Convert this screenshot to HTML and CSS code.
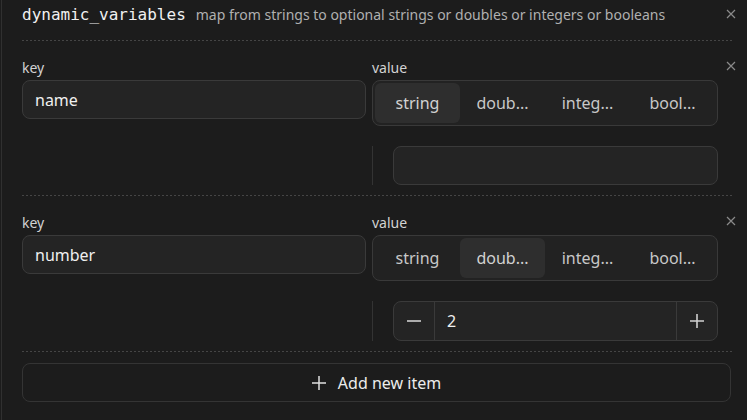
FILE: index.html
```html
<!DOCTYPE html>
<html>
<head>
<meta charset="utf-8">
<link rel="stylesheet" href="styles.css">
</head>
<body>
<div class="panel">
  <div class="header">
    <span class="title">dynamic_variables</span>
    <span class="desc">map from strings to optional strings or doubles or integers or booleans</span>
    <span class="x hdr-x"><svg width="10" height="10" viewBox="0 0 10 10"><path d="M1 1L9 9M9 1L1 9" stroke="#8a8a8a" stroke-width="1.2"/></svg></span>
  </div>
  <div class="sep"></div>

  <div class="entry">
    <span class="x entry-x"><svg width="10" height="10" viewBox="0 0 10 10"><path d="M1 1L9 9M9 1L1 9" stroke="#8a8a8a" stroke-width="1.2"/></svg></span>
    <div class="cols">
      <div class="col key-col">
        <div class="label">key</div>
        <div class="input key-input">name</div>
      </div>
      <div class="col">
        <div class="label">value</div>
        <div class="seg">
          <div class="opt sel">string</div>
          <div class="opt">doub...</div>
          <div class="opt">integ...</div>
          <div class="opt">bool...</div>
        </div>
      </div>
    </div>
    <div class="sub">
      <div class="vline"></div>
      <div class="input val-input"></div>
    </div>
  </div>
  <div class="sep"></div>

  <div class="entry">
    <span class="x entry-x"><svg width="10" height="10" viewBox="0 0 10 10"><path d="M1 1L9 9M9 1L1 9" stroke="#8a8a8a" stroke-width="1.2"/></svg></span>
    <div class="cols">
      <div class="col key-col">
        <div class="label">key</div>
        <div class="input key-input">number</div>
      </div>
      <div class="col">
        <div class="label">value</div>
        <div class="seg">
          <div class="opt">string</div>
          <div class="opt sel">doub...</div>
          <div class="opt">integ...</div>
          <div class="opt">bool...</div>
        </div>
      </div>
    </div>
    <div class="sub">
      <div class="vline"></div>
      <div class="num">
        <div class="step minus"><svg width="14" height="14" viewBox="0 0 14 14"><path d="M0 7H14" stroke="#cfcfcf" stroke-width="1.6"/></svg></div>
        <div class="numval">2</div>
        <div class="step plus"><svg width="14" height="14" viewBox="0 0 14 14"><path d="M0 7H14M7 0V14" stroke="#cfcfcf" stroke-width="1.6"/></svg></div>
      </div>
    </div>
  </div>
  <div class="sep"></div>

  <div class="add">
    <svg width="14" height="14" viewBox="0 0 14 14"><path d="M0 7H14M7 0V14" stroke="#e0e0e0" stroke-width="1.5"/></svg>
    <span>Add new item</span>
  </div>
</div>
</body>
</html>
```

FILE: styles.css
```css
html, body {
  margin: 0;
  padding: 0;
  background: #1c1c1c;
  height: 100%;
}
body {
  font-family: "Noto Sans", "Open Sans", sans-serif;
  color: #e6e6e6;
}
.panel {
  margin-left: 1px;
  border-left: 1px solid #303030;
  padding: 0 15px 0 20px;
  min-height: 420px;
  box-sizing: border-box;
}
.header {
  position: relative;
  height: 28px;
  display: flex;
  align-items: center;
  gap: 10px;
  margin-bottom: 12px;
}
.title {
  font-family: "DejaVu Sans Mono", monospace;
  font-size: 16px;
  color: #f0f0f0;
}
.desc {
  font-size: 14px;
  color: #b0b0b0;
}
.x {
  position: absolute;
  display: flex;
}
.hdr-x {
  right: -4px;
  top: 9px;
}
.entry-x {
  right: -4px;
  top: 20px;
}
.sep {
  height: 1px;
  background-image: repeating-linear-gradient(to right, #454545 0 2px, transparent 2px 4px);
}
.entry {
  position: relative;
  padding: 18px 14px 10px 0;
}
.cols {
  display: grid;
  grid-template-columns: 344px 1fr;
  column-gap: 6px;
}
.label {
  font-size: 14px;
  line-height: 18px;
  color: #d2d2d2;
  margin-bottom: 3px;
}
.input {
  box-sizing: border-box;
  border: 1px solid #3a3a3a;
  background: #242424;
  border-radius: 8px;
  height: 39px;
  display: flex;
  align-items: center;
  padding: 0 12px;
  font-size: 16px;
  color: #f0f0f0;
}
.key-input {
  margin-top: 1px;
}
.seg {
  box-sizing: border-box;
  height: 46px;
  border: 1px solid #393939;
  background: #222222;
  border-radius: 8px;
  padding: 2px;
  display: grid;
  grid-template-columns: repeat(4, 1fr);
}
.opt {
  display: flex;
  align-items: center;
  justify-content: center;
  font-size: 16px;
  color: #c8c8c8;
  border-radius: 6px;
}
.opt.sel {
  background: #2e2e2e;
  color: #d2d2d2;
}
.sub {
  display: flex;
  margin-top: 20px;
  padding-left: 350px;
  gap: 20px;
}
.vline {
  width: 1px;
  background: #333333;
}
.val-input {
  flex: 1;
}
.num {
  flex: 1;
  box-sizing: border-box;
  height: 40px;
  border: 1px solid #3a3a3a;
  background: #242424;
  border-radius: 8px;
  display: flex;
}
.step {
  width: 40px;
  display: flex;
  align-items: center;
  justify-content: center;
}
.minus {
  border-right: 1px solid #3a3a3a;
}
.plus {
  border-left: 1px solid #3a3a3a;
}
.numval {
  flex: 1;
  display: flex;
  align-items: center;
  padding-left: 12px;
  font-size: 16px;
  color: #f0f0f0;
}
.add {
  margin-top: 11px;
  box-sizing: border-box;
  height: 39px;
  border: 1px solid #343434;
  border-radius: 8px;
  margin-right: 1px;
  display: flex;
  align-items: center;
  justify-content: center;
  gap: 12px;
  font-size: 16px;
  color: #ececec;
}
```
